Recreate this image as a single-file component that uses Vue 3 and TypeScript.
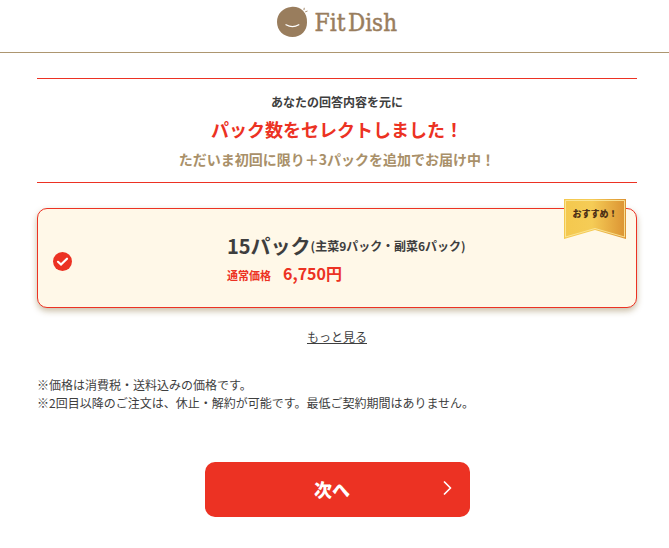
<script setup lang="ts">
import { ref } from 'vue'

interface Plan {
  packs: string
  detail: string
  price: string
}

const plan: Plan = {
  packs: '15パック',
  detail: '(主菜9パック・副菜6パック)',
  price: '6,750円',
}
const notes: string[] = [
  '※価格は消費税・送料込みの価格です。',
  '※2回目以降のご注文は、休止・解約が可能です。最低ご契約期間はありません。',
]
const selected = ref(true)
</script>

<template>
  <div class="page">
    <header class="header">
      <svg class="logo" width="122" height="36" viewBox="0 0 122 36" role="img" aria-label="Fit Dish">
        <path d="M15 4C19.500 3.400 24 4.600 27 7.800C30 11 31.200 14.500 31 19.500C31 27.500 25.500 34 16.500 34C7.600 34 1 27.500 1 19C1 10.500 7 5 15 4Z" fill="#997d5d" />
        <path d="M10 21.800Q16.500 25.400 22.800 21.800" fill="none" stroke="#fff" stroke-width="1.300" stroke-linecap="round" />
        <path d="M28 6.700l.2-1.500M29.600 8.700l1.500-.5" fill="none" stroke="#997d5d" stroke-width="0.900" stroke-linecap="round" />
        <text x="38.500" y="28.300" textLength="31" lengthAdjust="spacingAndGlyphs">Fit</text>
        <text x="72" y="28.300" textLength="49" lengthAdjust="spacingAndGlyphs">Dish</text>
      </svg>
    </header>

    <main class="main">
      <section class="intro">
        <p class="lead">あなたの回答内容を元に</p>
        <h1 class="title">パック数をセレクトしました！</h1>
        <p class="bonus">ただいま初回に限り＋3パックを追加でお届け中！</p>
      </section>

      <section class="plan" @click="selected = true">
        <svg v-if="selected" class="check" width="19" height="19" viewBox="0 0 19 19">
          <circle cx="9.500" cy="9.500" r="9.500" fill="#ec3223" />
          <path d="M5 9.800L8 12.600L14 6.700" fill="none" stroke="#fff" stroke-width="2.200" stroke-linecap="round" />
        </svg>
        <div class="plan-text">
          <p class="packs">{{ plan.packs }}<span class="detail">{{ plan.detail }}</span></p>
          <p class="price"><span class="price-label">通常価格</span>{{ plan.price }}</p>
        </div>
        <div class="badge">
          <svg class="ribbon" width="62" height="40" viewBox="0 0 62 40">
            <defs>
              <linearGradient id="gold" x1="0" y1="0" x2="1" y2="0">
                <stop offset="0" stop-color="#f4c84e" />
                <stop offset="0.450" stop-color="#f5cc56" />
                <stop offset="1" stop-color="#db9232" />
              </linearGradient>
            </defs>
            <path d="M0 0H62V40L31 31L0 40Z" fill="url(#gold)" />
            <path d="M1.500 1.500H60.500V38L31 29.500L1.500 38Z" fill="none" stroke="#fbe69b" stroke-width="0.900" />
          </svg>
          <span class="badge-text">おすすめ！</span>
        </div>
      </section>

      <a class="more" href="#">もっと見る</a>

      <div class="notes">
        <p v-for="note in notes" :key="note">{{ note }}</p>
      </div>

      <button class="next" type="button">
        次へ
        <svg class="chevron" width="9" height="14" viewBox="0 0 9 14">
          <path d="M1.500 1L7.500 7L1.500 13" fill="none" stroke="#fff" stroke-width="1.700" stroke-linecap="round" stroke-linejoin="round" />
        </svg>
      </button>
    </main>
  </div>
</template>

<style>
body {
  background: #fff;
  overflow: hidden;
}
</style>

<style scoped>
.page {
  width: 674px;
  height: 548px;
  font-family: "Noto Sans CJK JP", sans-serif;
  font-weight: 400;
  color: #3e3e3e;
}
p,
h1 {
  margin: 0;
}
.header {
  box-sizing: border-box;
  height: 53px;
  padding-top: 3px;
  border-bottom: 1px solid #ad9670;
  display: flex;
  justify-content: center;
}
.logo {
  overflow: visible;
}
.logo text {
  font-family: "DejaVu Serif", serif;
  font-size: 24px;
  fill: #997d5d;
  stroke: #997d5d;
  stroke-width: 0.5px;
}
.main {
  width: 600px;
  margin: 25px auto 0;
  display: flex;
  flex-direction: column;
  align-items: center;
}
.intro {
  box-sizing: border-box;
  width: 100%;
  height: 105px;
  padding-top: 14px;
  border-top: 1px solid #ec3223;
  border-bottom: 1px solid #ec3223;
  text-align: center;
  font-weight: 700;
}
.lead {
  font-size: 12px;
  line-height: 18px;
}
.title {
  margin-top: 5px;
  font-size: 18px;
  line-height: 27px;
  color: #ec3223;
}
.bonus {
  margin-top: 6px;
  font-size: 14px;
  line-height: 21px;
  color: #a99069;
}
.plan {
  position: relative;
  box-sizing: border-box;
  width: 100%;
  height: 100px;
  margin-top: 25px;
  padding-left: 15px;
  display: flex;
  align-items: center;
  border: 1px solid #ec3223;
  border-radius: 10px;
  background: #fff8e8;
  box-shadow: 0 3px 6px rgba(120, 90, 30, 0.4);
}
.check {
  margin-top: 6px;
}
.plan-text {
  margin-left: 155px;
  font-weight: 700;
}
.packs {
  display: flex;
  align-items: center;
  height: 30px;
  padding-top: 2px;
  font-size: 20px;
  line-height: 30px;
  white-space: nowrap;
}
.detail {
  font-size: 12px;
}
.price {
  font-size: 16px;
  line-height: 24px;
  color: #ec3223;
}
.price-label {
  margin-right: 12px;
  font-size: 11px;
}
.badge {
  position: absolute;
  top: -10px;
  right: 10px;
  width: 62px;
  height: 40px;
}
.ribbon {
  display: block;
}
.badge-text {
  position: absolute;
  inset: 7px 0 auto;
  text-align: center;
  font-size: 9px;
  font-weight: 900;
  line-height: 16px;
  color: #4c2f16;
}
.more {
  margin-top: 20px;
  font-size: 12px;
  line-height: 18px;
  color: #3e3e3e;
  text-decoration: underline;
}
.notes {
  align-self: stretch;
  margin-top: 30px;
  font-size: 12px;
  line-height: 18px;
}
.next {
  position: relative;
  width: 265px;
  height: 55px;
  margin-top: 50px;
  padding: 0 10px 2px 0;
  border: 0;
  border-radius: 10px;
  background: #ec3223;
  color: #fff;
  font-family: inherit;
  font-size: 18px;
  font-weight: 900;
}
.chevron {
  position: absolute;
  top: 18.5px;
  right: 18px;
}
</style>
